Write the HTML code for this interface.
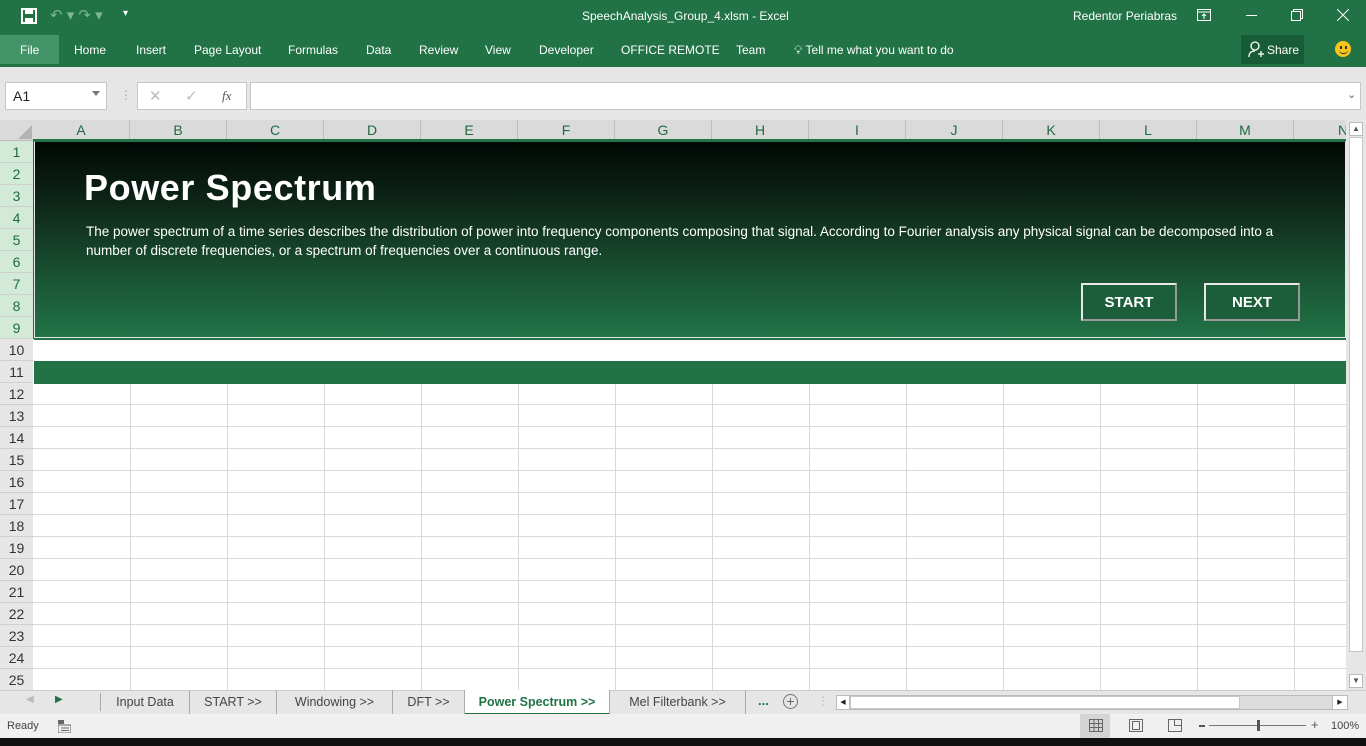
<!DOCTYPE html>
<html><head><meta charset="utf-8"><style>
*{margin:0;padding:0;box-sizing:border-box}
body{width:1366px;height:746px;overflow:hidden;background:#fff;font-family:"Liberation Sans",sans-serif;position:relative;font-size:12px;color:#222}
.abs{position:absolute}
.g{background:#217346}
.w{color:#fff}
.tab{position:absolute;top:43px;color:#fff;font-size:12px}
.col{position:absolute;top:120px;height:21px;border-right:1px solid #bdbdbd;text-align:center;line-height:21px;font-size:14px;color:#1e6b41}
.row{position:absolute;left:0;width:33px;height:22px;border-bottom:1px solid #cfcfcf;text-align:center;line-height:22px;font-size:14px;color:#333;background:#e6e6e6}
.vl{position:absolute;top:141px;height:549px;width:1px;background:#d9d9d9}
.hl{position:absolute;left:33px;width:1313px;height:1px;background:#d9d9d9}
.st{position:absolute;top:690px;height:24px;line-height:24px;font-size:12.5px;color:#444;border-right:1px solid #aaa;text-align:center}
.btn{position:absolute;top:283px;width:96px;height:38px;border:2px solid #e8e8e8;border-right-color:#999;border-bottom-color:#999;color:#fff;font-weight:bold;font-size:15px;text-align:center;line-height:36px;background:#1d5e3a}
</style></head><body>
<div class="abs g" style="left:0;top:0;width:1366px;height:67px"></div>
<svg class="abs" style="left:21px;top:8px" width="16" height="16"><rect x="1" y="1" width="14" height="14" fill="none" stroke="#fff" stroke-width="2"/><rect x="4" y="1" width="8" height="5" fill="#fff"/><rect x="4" y="10" width="8" height="5" fill="#fff"/></svg>
<div class="abs" style="left:50px;top:6px;color:#7fb595;font-size:15px">↶ ▾ ↷ ▾</div>
<div class="abs w" style="left:123px;top:8px;font-size:10px">▾</div>
<div class="abs w" style="left:582px;top:9px;font-size:12px">SpeechAnalysis_Group_4.xlsm  -  Excel</div>
<div class="abs w" style="left:1073px;top:9px;font-size:12px">Redentor Periabras</div>
<svg class="abs" style="left:1197px;top:9px" width="15" height="13"><rect x=".5" y=".5" width="13" height="11" fill="none" stroke="#fff"/><line x1="1" y1="3" x2="13" y2="3" stroke="#fff"/><path d="M7 10V5M5 7l2-2 2 2" stroke="#fff" fill="none"/></svg>
<div class="abs" style="left:1246px;top:15px;width:11px;height:1px;background:#fff"></div>
<svg class="abs" style="left:1291px;top:9px" width="12" height="12"><rect x=".5" y="2.5" width="9" height="9" fill="none" stroke="#fff"/><path d="M2.5 2.5V.5h9v9h-2" fill="none" stroke="#fff"/></svg>
<svg class="abs" style="left:1337px;top:9px" width="12" height="12"><path d="M0 0L12 12M12 0L0 12" stroke="#fff"/></svg>
<div class="abs" style="left:0;top:35px;width:59px;height:29px;background:#439467"></div>
<div class="tab" style="left:20px">File</div>
<div class="tab" style="left:74px">Home</div>
<div class="tab" style="left:136px">Insert</div>
<div class="tab" style="left:194px">Page Layout</div>
<div class="tab" style="left:288px">Formulas</div>
<div class="tab" style="left:366px">Data</div>
<div class="tab" style="left:419px">Review</div>
<div class="tab" style="left:485px">View</div>
<div class="tab" style="left:539px">Developer</div>
<div class="tab" style="left:621px">OFFICE REMOTE</div>
<div class="tab" style="left:736px">Team</div>
<div class="tab" style="left:794px">💡︎ Tell me what you want to do</div>
<div class="abs" style="left:1241px;top:35px;width:63px;height:29px;background:#185c37"></div>
<svg class="abs" style="left:1248px;top:41px" width="16" height="17"><circle cx="7" cy="5" r="4" fill="none" stroke="#fff" stroke-width="1.3"/><path d="M1 16c0-5 3-6 6-6M10 13h6M13 10v6" fill="none" stroke="#fff" stroke-width="1.3"/></svg>
<div class="tab" style="left:1267px">Share</div>
<div class="abs" style="left:1335px;top:41px;width:16px;height:16px;border-radius:50%;background:#f5c518"></div>
<div class="abs" style="left:1340px;top:46px;width:2px;height:3px;background:#333"></div><div class="abs" style="left:1345px;top:46px;width:2px;height:3px;background:#333"></div>
<div class="abs" style="left:1339px;top:50px;width:9px;height:4px;border-bottom:1.5px solid #333;border-radius:0 0 5px 5px"></div>
<div class="abs" style="left:0;top:67px;width:1366px;height:53px;background:#e6e6e6"></div>
<div class="abs" style="left:5px;top:82px;width:102px;height:28px;background:#fff;border:1px solid #c6c6c6;font-size:14px;line-height:26px;padding-left:7px">A1</div>
<div class="abs" style="left:92px;top:91px;border:4px solid transparent;border-top:5px solid #777"></div>
<div class="abs" style="left:120px;top:88px;color:#aaa;font-size:12px">⋮</div>
<div class="abs" style="left:137px;top:82px;width:110px;height:28px;background:#fff;border:1px solid #c6c6c6"></div>
<div class="abs" style="left:149px;top:87px;color:#bbb;font-size:15px">✕</div>
<div class="abs" style="left:185px;top:87px;color:#bbb;font-size:15px">✓</div>
<div class="abs" style="left:222px;top:88px;color:#555;font-size:13px;font-style:italic;font-family:'Liberation Serif',serif">fx</div>
<div class="abs" style="left:250px;top:82px;width:1111px;height:28px;background:#fff;border:1px solid #c6c6c6"></div>
<div class="abs" style="left:1347px;top:88px;color:#666;font-size:11px">⌄</div>
<div class="abs" style="left:0;top:120px;width:1346px;height:21px;background:#dadada;border-bottom:1px solid #bbb"></div>
<div class="abs" style="left:18px;top:125px;border:7px solid transparent;border-right-color:#b3b3b3;border-bottom-color:#b3b3b3"></div>
<div class="col" style="left:33px;width:97px">A</div><div class="col" style="left:130px;width:97px">B</div><div class="col" style="left:227px;width:97px">C</div><div class="col" style="left:324px;width:97px">D</div><div class="col" style="left:421px;width:97px">E</div><div class="col" style="left:518px;width:97px">F</div><div class="col" style="left:615px;width:97px">G</div><div class="col" style="left:712px;width:97px">H</div><div class="col" style="left:809px;width:97px">I</div><div class="col" style="left:906px;width:97px">J</div><div class="col" style="left:1003px;width:97px">K</div><div class="col" style="left:1100px;width:97px">L</div><div class="col" style="left:1197px;width:97px">M</div><div class="col" style="left:1294px;width:52px;text-align:left;padding-left:44px;overflow:hidden;border:none">N</div>
<div class="abs" style="left:33px;top:139px;width:1313px;height:2px;background:#217346"></div>
<div class="row" style="top:141px;background:#d3ead9;color:#1e6b41">1</div><div class="row" style="top:163px;background:#d3ead9;color:#1e6b41">2</div><div class="row" style="top:185px;background:#d3ead9;color:#1e6b41">3</div><div class="row" style="top:207px;background:#d3ead9;color:#1e6b41">4</div><div class="row" style="top:229px;background:#d3ead9;color:#1e6b41">5</div><div class="row" style="top:251px;background:#d3ead9;color:#1e6b41">6</div><div class="row" style="top:273px;background:#d3ead9;color:#1e6b41">7</div><div class="row" style="top:295px;background:#d3ead9;color:#1e6b41">8</div><div class="row" style="top:317px;background:#d3ead9;color:#1e6b41">9</div>
<div class="row" style="top:339px">10</div><div class="row" style="top:361px">11</div><div class="row" style="top:383px">12</div><div class="row" style="top:405px">13</div><div class="row" style="top:427px">14</div><div class="row" style="top:449px">15</div><div class="row" style="top:471px">16</div><div class="row" style="top:493px">17</div><div class="row" style="top:515px">18</div><div class="row" style="top:537px">19</div><div class="row" style="top:559px">20</div><div class="row" style="top:581px">21</div><div class="row" style="top:603px">22</div><div class="row" style="top:625px">23</div><div class="row" style="top:647px">24</div><div class="row" style="top:669px">25</div>
<div class="abs" style="left:33px;top:141px;width:1px;height:198px;background:#217346"></div>
<div class="vl" style="left:130px"></div><div class="vl" style="left:227px"></div><div class="vl" style="left:324px"></div><div class="vl" style="left:421px"></div><div class="vl" style="left:518px"></div><div class="vl" style="left:615px"></div><div class="vl" style="left:712px"></div><div class="vl" style="left:809px"></div><div class="vl" style="left:906px"></div><div class="vl" style="left:1003px"></div><div class="vl" style="left:1100px"></div><div class="vl" style="left:1197px"></div><div class="vl" style="left:1294px"></div>
<div class="hl" style="top:404px"></div><div class="hl" style="top:426px"></div><div class="hl" style="top:448px"></div><div class="hl" style="top:470px"></div><div class="hl" style="top:492px"></div><div class="hl" style="top:514px"></div><div class="hl" style="top:536px"></div><div class="hl" style="top:558px"></div><div class="hl" style="top:580px"></div><div class="hl" style="top:602px"></div><div class="hl" style="top:624px"></div><div class="hl" style="top:646px"></div><div class="hl" style="top:668px"></div>
<div class="abs" style="left:34px;top:141px;width:1312px;height:220px;background:#fff"></div>
<div class="abs" style="left:34px;top:141px;width:1312px;height:197px;background:linear-gradient(#020805,#0f2a1b 35%,#1a5434 70%,#217346);border:1px solid #e6e6e6;border-top:1px solid #217346"></div>
<div class="abs" style="left:34px;top:338px;width:1312px;height:2px;background:#217346"></div>
<div class="abs w" style="left:84px;top:167px;font-size:36px;font-weight:bold;letter-spacing:0.6px">Power Spectrum</div>
<div class="abs w" style="left:86px;top:222px;font-size:13.5px;line-height:19px;width:1200px">The power spectrum of a time series describes the distribution of power into frequency components composing that signal. According to Fourier analysis any physical signal can be decomposed into a number of discrete frequencies, or a spectrum of frequencies over a continuous range.</div>
<div class="btn" style="left:1081px">START</div>
<div class="btn" style="left:1204px">NEXT</div>
<div class="abs g" style="left:34px;top:361px;width:1312px;height:23px"></div>
<div class="abs" style="left:1346px;top:120px;width:20px;height:570px;background:#e6e6e6"></div>
<div class="abs" style="left:1349px;top:122px;width:14px;height:14px;background:#fff;border:1px solid #bbb;font-size:8px;text-align:center;line-height:12px;color:#555">▲</div>
<div class="abs" style="left:1349px;top:137px;width:14px;height:515px;background:#fff;border:1px solid #c6c6c6"></div>
<div class="abs" style="left:1349px;top:674px;width:14px;height:14px;background:#fff;border:1px solid #bbb;font-size:8px;text-align:center;line-height:12px;color:#555">▼</div>
<div class="abs" style="left:0;top:690px;width:1366px;height:24px;background:#e6e6e6;border-top:1px solid #ccc"></div>
<div class="abs" style="left:26px;top:694px;color:#bbb;font-size:10px">◀</div>
<div class="abs" style="left:55px;top:694px;color:#217346;font-size:10px">▶</div>
<div class="abs" style="left:100px;top:693px;width:1px;height:18px;background:#aaa"></div>
<div class="st" style="left:101px;width:89px">Input Data</div>
<div class="st" style="left:190px;width:87px">START &gt;&gt;</div>
<div class="st" style="left:277px;width:116px">Windowing &gt;&gt;</div>
<div class="st" style="left:393px;width:72px">DFT &gt;&gt;</div>
<div class="st" style="left:465px;width:145px;background:#fff;color:#217346;font-weight:bold;border-bottom:2px solid #217346;top:690px;height:25px">Power Spectrum &gt;&gt;</div>
<div class="st" style="left:610px;width:136px">Mel Filterbank &gt;&gt;</div>
<div class="abs" style="left:758px;top:693px;color:#217346;font-weight:bold;font-size:13px">...</div>
<div class="abs" style="left:783px;top:694px;width:15px;height:15px;border:1px solid #777;border-radius:50%;text-align:center;line-height:12px;color:#666;font-size:14px">+</div>
<div class="abs" style="left:817px;top:694px;color:#bbb">⋮</div>
<div class="abs" style="left:836px;top:695px;width:512px;height:15px;background:#dcdcdc;border:1px solid #bbb"></div>
<div class="abs" style="left:850px;top:696px;width:390px;height:13px;background:#fff;border:1px solid #c6c6c6"></div>
<div class="abs" style="left:836px;top:695px;width:14px;height:15px;background:#fff;border:1px solid #bbb;font-size:7px;text-align:center;line-height:13px">◀</div>
<div class="abs" style="left:1332px;top:695px;width:16px;height:15px;background:#fff;border:1px solid #bbb;font-size:7px;text-align:center;line-height:13px">▶</div>
<div class="abs" style="left:0;top:714px;width:1366px;height:24px;background:#f0f0f0"></div>
<div class="abs" style="left:7px;top:720px;font-size:11px;color:#444">Ready</div>
<svg class="abs" style="left:58px;top:720px" width="13" height="13"><rect x="0" y="0" width="6" height="4" fill="#666"/><rect x="0" y="5" width="13" height="8" fill="none" stroke="#666"/><path d="M3 8h8M3 10.5h8" stroke="#666"/></svg>
<div class="abs" style="left:1080px;top:714px;width:30px;height:24px;background:#d4d4d4"></div>
<svg class="abs" style="left:1089px;top:719px" width="14" height="13"><path d="M.5.5h13v12H.5zM5 .5v12M9.5.5v12M.5 4.5h13M.5 8.5h13" fill="none" stroke="#666"/></svg>
<svg class="abs" style="left:1129px;top:719px" width="14" height="13"><rect x=".5" y=".5" width="13" height="12" fill="none" stroke="#666"/><rect x="3.5" y="2.5" width="7" height="8" fill="none" stroke="#666"/></svg>
<svg class="abs" style="left:1168px;top:719px" width="14" height="13"><path d="M.5.5h13v12H.5zM6.5.5v6h7" fill="none" stroke="#666"/></svg>
<div class="abs" style="left:1199px;top:725px;width:6px;height:1.5px;background:#555"></div>
<div class="abs" style="left:1209px;top:725px;width:97px;height:1px;background:#777"></div>
<div class="abs" style="left:1257px;top:720px;width:3px;height:11px;background:#555"></div>
<div class="abs" style="left:1311px;top:717px;color:#555;font-size:13px">+</div>
<div class="abs" style="left:1331px;top:720px;color:#444;font-size:11px">100%</div>
<div class="abs" style="left:0;top:738px;width:1366px;height:8px;background:#101010"></div>
</body></html>
